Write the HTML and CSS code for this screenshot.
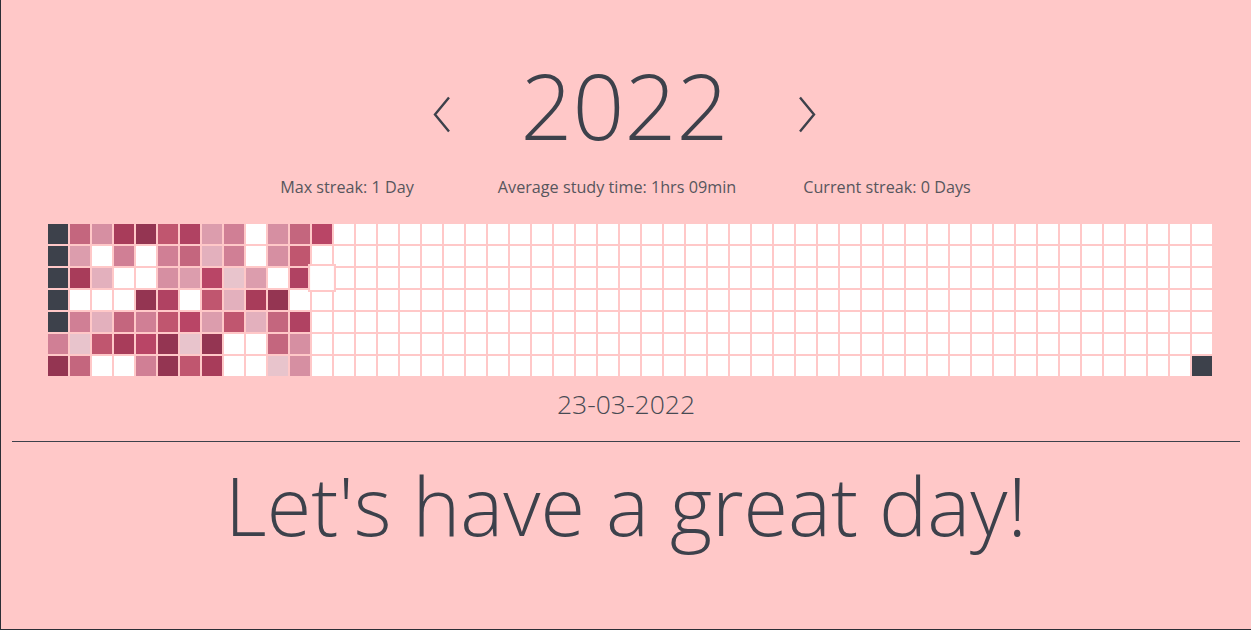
FILE: index.html
```html
<!DOCTYPE html>
<html lang="en">
<head>
<meta charset="UTF-8">
<meta name="viewport" content="width=device-width, initial-scale=1.0">
<title>Study Tracker</title>
<link rel="stylesheet" href="styles.css">
</head>
<body>
<div class="page">
  <div class="year-nav">
    <button class="arrow" id="prevYear" aria-label="Previous year">
      <svg width="18" height="37" viewBox="0 0 18 37"><polyline points="16,1.5 2,18.5 16,35.5" /></svg>
    </button>
    <h1 class="year" id="year">2022</h1>
    <button class="arrow" id="nextYear" aria-label="Next year">
      <svg width="18" height="37" viewBox="0 0 18 37"><polyline points="2,1.5 16,18.5 2,35.5" /></svg>
    </button>
  </div>

  <div class="stats">
    <span class="stat">Max streak: 1 Day</span>
    <span class="stat">Average study time: 1hrs 09min</span>
    <span class="stat">Current streak: 0 Days</span>
  </div>

  <div class="heatmap" id="heatmap"></div>

  <div class="date" id="selectedDate">23-03-2022</div>

  <hr class="divider">

  <p class="motto">Let's have a great day!</p>
</div>

<script src="script.js"></script>
</body>
</html>
```

FILE: styles.css
```css
body {
  margin: 0;
  padding: 0;
  font-family: "Open Sans", "Noto Sans", sans-serif;
  background-color: #ffc8c8;
  color: #3d414b;
}

.page {
  height: 629px;
  border-left: 1px solid #2b2e36;
  border-bottom: 1px solid #2b2e36;
  padding: 0 11px 0 11px;
  overflow: hidden;
}

.year-nav {
  display: flex;
  justify-content: center;
  align-items: center;
  gap: 70px;
  padding-top: 60px;
  padding-right: 3px;
}

.year {
  margin: 0;
  font-size: 91px;
  font-weight: 300;
  line-height: 91px;
}

.arrow {
  background: none;
  border: none;
  padding: 0;
  cursor: pointer;
  display: flex;
  margin-top: 18px;
}

.arrow polyline {
  fill: none;
  stroke: #3d414b;
  stroke-width: 2.4;
}

.stats {
  display: flex;
  justify-content: center;
  margin-top: 25px;
  padding-right: 18px;
  font-size: 16.2px;
  color: #57565d;
}

.stat {
  width: 270px;
  text-align: center;
}

.heatmap {
  display: grid;
  grid-template-rows: repeat(7, 20px);
  grid-auto-flow: column;
  grid-auto-columns: 20px;
  gap: 2px;
  margin: 26px 0 0 36px;
}

.cell {
  background-color: white;
}

.cell.active {
  transform: scale(1.4);
  box-shadow: inset 0 0 0 1.5px #ffc8c8;
}

.cell.off { background-color: #3d414b; }
.cell.la { background-color: #943552; }
.cell.lb { background-color: #a83c5a; }
.cell.lc { background-color: #b04262; }
.cell.ld { background-color: #b94566; }
.cell.le { background-color: #c0566f; }
.cell.lf { background-color: #c4667e; }
.cell.lg { background-color: #d07f95; }
.cell.lh { background-color: #d68fa2; }
.cell.li { background-color: #dc9dad; }
.cell.lj { background-color: #e3b0bd; }
.cell.lk { background-color: #e8c4cc; }

.date {
  text-align: center;
  font-size: 26.5px;
  font-weight: 300;
  margin-top: 10px;
  color: #474a53;
}

.divider {
  border: none;
  border-top: 1px solid #3d414b;
  margin: 19px 0 0 0;
}

.motto {
  margin: 14px 0 0 0;
  text-align: center;
  font-size: 81px;
  font-weight: 300;
  line-height: 1.2;
}
```

FILE: script.js
```js
// study levels per day, one string per weekday row (Mon..Sun), one char per week
// D = outside the year, w = nothing studied, a..k = darkest..lightest
var rows = [
  "Dfhbaecigwhfd",
  "Diwgwgfjgwhew",
  "Dbjwwhidkiwcw",
  "Dwwwacwejbaww",
  "Dgjfgediejfcw",
  "gkebdakawwfhw",
  "afwwgaebwwkhw"
];

var weeks = 53;
var heatmap = document.getElementById("heatmap");

for (var col = 0; col < weeks; col++) {
  for (var row = 0; row < 7; row++) {
    var cell = document.createElement("div");
    cell.className = "cell";
    var level = rows[row][col] || "w";
    if (col == weeks - 1 && row == 6) level = "D";

    if (level == "D") {
      cell.classList.add("off");
    } else if (level != "w") {
      cell.classList.add("l" + level);
    }
    // today
    if (col == 12 && row == 2) cell.classList.add("active");
    heatmap.appendChild(cell);
  }
}
```
